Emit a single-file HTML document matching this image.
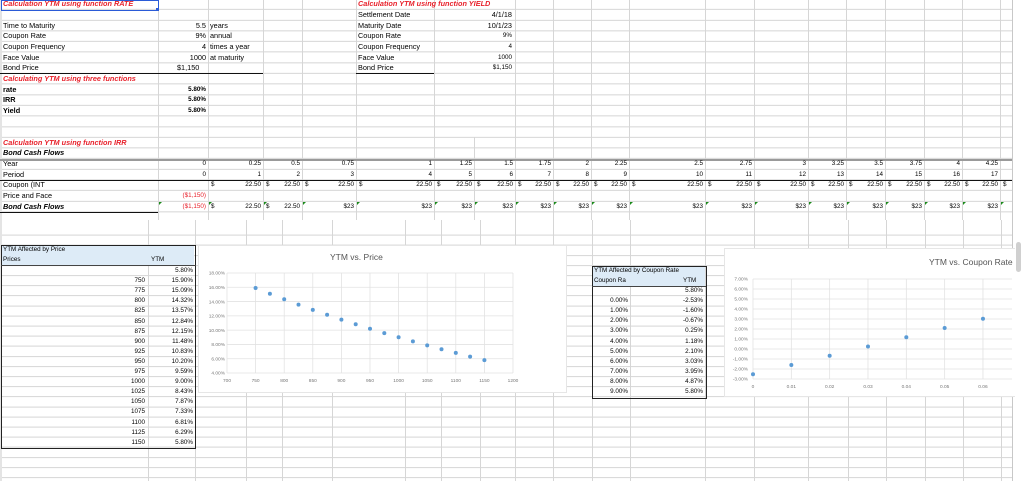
<!DOCTYPE html>
<html><head><meta charset="utf-8">
<style>
html,body{margin:0;padding:0;background:#fff;}
body{width:1024px;height:481px;position:relative;overflow:hidden;font-family:"Liberation Sans",sans-serif;font-size:7.3px;color:#000;}
.g1{position:absolute;left:0;top:0;width:1012px;height:220px;
 background-image:repeating-linear-gradient(to bottom,transparent 0,transparent 9.65px,#d6d6d6 9.65px,#d6d6d6 10.65px);background-position:0 -0.65px;}
.g2{position:absolute;left:0;top:220px;width:1012px;height:261px;
 background-image:repeating-linear-gradient(to bottom,transparent 0,transparent 9.1px,#d6d6d6 9.1px,#d6d6d6 10.1px);background-position:0 5.6px;}
.v{position:absolute;width:1px;background:#d6d6d6;}
.t{position:absolute;white-space:nowrap;line-height:10.6px;height:10.6px;}
.r{text-align:right;}
.red{color:#e8212b;font-weight:bold;font-style:italic;}
.bi{font-weight:bold;font-style:italic;}
.b{font-weight:bold;}
.h{position:absolute;height:1px;background:#111;}
.tri{position:absolute;width:0;height:0;border-top:3px solid #1a8a1a;border-right:3px solid transparent;}
</style></head><body>
<div class="g1"></div>
<div class="g2"></div>
<div class="v" style="left:158px;top:0;height:220px"></div>
<div class="v" style="left:208px;top:0;height:220px"></div>
<div class="v" style="left:263px;top:0;height:220px"></div>
<div class="v" style="left:302px;top:0;height:220px"></div>
<div class="v" style="left:356px;top:0;height:220px"></div>
<div class="v" style="left:434px;top:0;height:220px"></div>
<div class="v" style="left:474px;top:137px;height:83px"></div>
<div class="v" style="left:515px;top:0;height:220px"></div>
<div class="v" style="left:553px;top:0;height:220px"></div>
<div class="v" style="left:591px;top:0;height:220px"></div>
<div class="v" style="left:629px;top:0;height:220px"></div>
<div class="v" style="left:705px;top:0;height:220px"></div>
<div class="v" style="left:754px;top:0;height:220px"></div>
<div class="v" style="left:808px;top:0;height:220px"></div>
<div class="v" style="left:846px;top:0;height:220px"></div>
<div class="v" style="left:885px;top:0;height:220px"></div>
<div class="v" style="left:924px;top:0;height:220px"></div>
<div class="v" style="left:962px;top:0;height:220px"></div>
<div class="v" style="left:1000px;top:0;height:220px"></div>
<div class="v" style="left:148px;top:220px;height:261px"></div>
<div class="v" style="left:195px;top:220px;height:261px"></div>
<div class="v" style="left:246px;top:220px;height:261px"></div>
<div class="v" style="left:282px;top:220px;height:261px"></div>
<div class="v" style="left:332px;top:220px;height:261px"></div>
<div class="v" style="left:405px;top:220px;height:261px"></div>
<div class="v" style="left:441px;top:220px;height:261px"></div>
<div class="v" style="left:480px;top:220px;height:261px"></div>
<div class="v" style="left:515px;top:220px;height:261px"></div>
<div class="v" style="left:553px;top:220px;height:261px"></div>
<div class="v" style="left:592px;top:220px;height:261px"></div>
<div class="v" style="left:630px;top:220px;height:261px"></div>
<div class="v" style="left:705px;top:220px;height:261px"></div>
<div class="v" style="left:754px;top:220px;height:261px"></div>
<div class="v" style="left:808px;top:220px;height:261px"></div>
<div class="v" style="left:848px;top:220px;height:261px"></div>
<div class="v" style="left:886px;top:220px;height:261px"></div>
<div class="v" style="left:925px;top:220px;height:261px"></div>
<div class="v" style="left:963px;top:220px;height:261px"></div>
<div class="v" style="left:1001px;top:220px;height:261px"></div>
<div style="position:absolute;left:1012px;top:0;width:12px;height:481px;background:#fff;border-left:1px solid #c8c8c8"></div>
<div style="position:absolute;left:1016px;top:242px;width:5px;height:30px;background:#d0d0d0;border-radius:3px"></div>
<div style="position:absolute;left:0;top:0;width:2px;height:481px;background:#e4e4e4"></div>

<div style="position:absolute;left:1px;top:0;width:156px;height:9px;border:1px solid #2a5bd7"></div>
<div style="position:absolute;left:156px;top:8px;width:3px;height:3px;background:#2a5bd7"></div>

<div class="h" style="left:0;top:73px;width:263px"></div>
<div class="h" style="left:356px;top:73px;width:78px"></div>
<div style="position:absolute;left:0;top:159px;width:1012px;height:1.5px;background:#9a9a9a"></div>
<div class="h" style="left:0;top:180px;width:1012px"></div>
<div class="h" style="left:0;top:212px;width:158px"></div>

<div class="t red" style="left:3px;top:-1px">Calculation YTM using function RATE</div>
<div class="t" style="left:3px;top:20.6px">Time to Maturity</div>
<div class="t" style="left:3px;top:31.3px">Coupon Rate</div>
<div class="t" style="left:3px;top:42px">Coupon Frequency</div>
<div class="t" style="left:3px;top:52.6px">Face Value</div>
<div class="t" style="left:3px;top:63.2px">Bond Price</div>
<div class="t red" style="left:3px;top:73.9px">Calculating YTM using three functions</div>
<div class="t b" style="left:3px;top:84.5px">rate</div>
<div class="t b" style="left:3px;top:95.2px">IRR</div>
<div class="t b" style="left:3px;top:105.8px">Yield</div>
<div class="t r" style="left:158px;width:48px;top:20.6px">5.5</div>
<div class="t r" style="left:158px;width:48px;top:31.3px">9%</div>
<div class="t r" style="left:158px;width:48px;top:42px">4</div>
<div class="t r" style="left:158px;width:48px;top:52.6px">1000</div>
<div class="t" style="left:177px;top:63.2px">$1,150</div>
<div class="t" style="left:210px;top:20.6px">years</div>
<div class="t" style="left:210px;top:31.3px">annual</div>
<div class="t" style="left:210px;top:42px">times a year</div>
<div class="t" style="left:210px;top:52.6px">at maturity</div>
<div class="t r b" style="left:158px;width:48px;top:84.5px;font-size:6.3px">5.80%</div>
<div class="t r b" style="left:158px;width:48px;top:95.2px;font-size:6.3px">5.80%</div>
<div class="t r b" style="left:158px;width:48px;top:105.8px;font-size:6.3px">5.80%</div>

<div class="t red" style="left:358px;top:-1px">Calculation YTM using function YIELD</div>
<div class="t" style="left:358px;top:10px">Settlement Date</div>
<div class="t" style="left:358px;top:20.6px">Maturity Date</div>
<div class="t" style="left:358px;top:31.3px">Coupon Rate</div>
<div class="t" style="left:358px;top:42px">Coupon Frequency</div>
<div class="t" style="left:358px;top:52.6px">Face Value</div>
<div class="t" style="left:358px;top:63.2px">Bond Price</div>
<div class="t r" style="left:440px;width:72px;top:10px">4/1/18</div>
<div class="t r" style="left:440px;width:72px;top:20.6px">10/1/23</div>
<div class="t r" style="left:440px;width:72px;top:31.3px;font-size:6.3px">9%</div>
<div class="t r" style="left:440px;width:72px;top:42px;font-size:6.3px">4</div>
<div class="t r" style="left:440px;width:72px;top:52.6px;font-size:6.3px">1000</div>
<div class="t r" style="left:440px;width:72px;top:63.2px;font-size:6.3px">$1,150</div>

<div class="t red" style="left:3px;top:137.8px">Calculation YTM using function IRR</div>
<div class="t bi" style="left:3px;top:148.4px">Bond Cash Flows</div>
<div class="t" style="left:3px;top:159.1px">Year</div>
<div class="t" style="left:3px;top:169.7px">Period</div>
<div class="t" style="left:3px;top:180.4px">Coupon (INT</div>
<div class="t" style="left:3px;top:191px">Price and Face</div>
<div class="t bi" style="left:3px;top:201.7px">Bond Cash Flows</div>
<div class="t r" style="left:158px;width:48px;top:159.1px;font-size:6.3px">0</div>
<div class="t r" style="left:158px;width:48px;top:169.7px;font-size:6.3px">0</div>
<div class="t r" style="left:158px;width:48px;top:191px;font-size:6.3px;color:#e8212b">($1,150)</div>
<div class="t r" style="left:158px;width:48px;top:201.7px;font-size:6.3px;color:#e8212b">($1,150)</div>
<div class="tri" style="left:159px;top:202px"></div>

<div id="cols"></div>
<script>
(function(){
var L=[208,263,302,356,434,474,515,553,591,629,705,754,808,846,885,924,962];
var R=[263,302,356,434,474,515,553,591,629,705,754,808,846,885,924,962,1000];
var yr=["0.25","0.5","0.75","1","1.25","1.5","1.75","2","2.25","2.5","2.75","3","3.25","3.5","3.75","4","4.25"];
var h="";
function cell(l,w,top,txt){return '<div class="t r" style="left:'+l+'px;width:'+w+'px;top:'+top+'px;font-size:6.3px">'+txt+'</div>';}
for(var i=0;i<17;i++){
 var l=L[i],w=R[i]-L[i]-2;
 h+=cell(l,w,159.1,yr[i]);
 h+=cell(l,w,169.7,String(i+1));
 h+='<div class="t" style="left:'+(l+3)+'px;top:180.4px;font-size:6.3px">$</div>';
 h+=cell(l,w,180.4,"22.50");
 if(i<2){h+='<div class="t" style="left:'+(l+3)+'px;top:201.7px;font-size:6.3px">$</div>';h+=cell(l,w,201.7,"22.50");}
 else h+=cell(l,w,201.7,"$23");
 h+='<div class="tri" style="left:'+(l+1)+'px;top:202px"></div>';
}
h+='<div class="t" style="left:1003px;top:180.4px;font-size:6.3px">$</div>';
h+='<div class="tri" style="left:1001px;top:202px"></div>';
document.getElementById("cols").innerHTML=h;
})();
</script>

<div style="position:absolute;left:1px;top:245px;width:193px;height:20px;background:#ddebf7"></div>
<div style="position:absolute;left:1px;top:245px;width:193px;height:202px;border:1px solid #222"></div>
<div class="h" style="left:1px;top:265px;width:195px;background:#444"></div>
<div class="t" style="left:3px;top:245px;font-size:6.3px;line-height:10px">YTM Affected by Price</div>
<div class="t" style="left:3px;top:255px;font-size:6.3px;line-height:10px">Prices</div>
<div class="t" style="left:151px;top:255px;font-size:6.3px;line-height:10px">YTM</div>
<div id="pt"></div>
<div style="position:absolute;left:592px;top:266px;width:113px;height:20px;background:#ddebf7"></div>
<div style="position:absolute;left:592px;top:266px;width:113px;height:131px;border:1px solid #222"></div>
<div class="h" style="left:592px;top:286px;width:114px;background:#444"></div>
<div class="t" style="left:594px;top:266px;font-size:6.3px;line-height:10px">YTM Affected by Coupon Rate</div>
<div class="t" style="left:594px;top:276px;font-size:6.3px;line-height:10px">Coupon Ra</div>
<div class="t" style="left:683px;top:276px;font-size:6.3px;line-height:10px">YTM</div>
<div id="ct"></div>

<div style="position:absolute;left:198px;top:245px;width:367px;height:146px;background:#fff;border:1px solid #e6e6e6"></div>
<div class="t" style="left:330px;top:252px;font-size:8.5px;color:#555">YTM vs. Price</div>
<svg style="position:absolute;left:0;top:0" width="1024" height="481" id="sv"></svg>

<div style="position:absolute;left:724px;top:248px;width:290px;height:147px;background:#fff;border:1px solid #e6e6e6;border-right:none"></div>
<div class="t" style="left:929px;top:257px;font-size:8.5px;color:#555">YTM vs. Coupon Rate</div>
<svg style="position:absolute;left:0;top:0" width="1024" height="481" id="sv2"></svg>

<script>
(function(){
var P=[750,775,800,825,850,875,900,925,950,975,1000,1025,1050,1075,1100,1125,1150];
var Y=[15.90,15.09,14.32,13.57,12.84,12.15,11.48,10.83,10.20,9.59,9.00,8.43,7.87,7.33,6.81,6.29,5.80];
var h='<div class="t r" style="left:148px;width:45px;top:266px;font-size:6.3px;line-height:10px">5.80%</div>';
for(var i=0;i<17;i++){var t=276.1+10.1*i;
 h+='<div class="t r" style="left:100px;width:45px;top:'+t+'px;font-size:6.3px;line-height:10px">'+P[i]+'</div>';
 h+='<div class="t r" style="left:148px;width:45px;top:'+t+'px;font-size:6.3px;line-height:10px">'+Y[i].toFixed(2)+'%</div>';}
document.getElementById("pt").innerHTML=h;
var CR=[0,1,2,3,4,5,6,7,8,9],CY=["-2.53","-1.60","-0.67","0.25","1.18","2.10","3.03","3.95","4.87","5.80"];
h='<div class="t r" style="left:630px;width:73px;top:286px;font-size:6.3px;line-height:10px">5.80%</div>';
for(i=0;i<10;i++){var t2=296.1+10.1*i;
 h+='<div class="t r" style="left:592px;width:36px;top:'+t2+'px;font-size:6.3px;line-height:10px">'+CR[i].toFixed(2)+'%</div>';
 h+='<div class="t r" style="left:630px;width:73px;top:'+t2+'px;font-size:6.3px;line-height:10px">'+CY[i]+'%</div>';}
document.getElementById("ct").innerHTML=h;
var s='';
for(i=0;i<=7;i++){var y=273+i*100/7;s+='<line x1="227" x2="513" y1="'+y+'" y2="'+y+'" stroke="#e2e2e2" stroke-width="0.8"/>';
 s+='<text x="225" y="'+(y+1.7)+'" font-size="4.8" fill="#777" text-anchor="end" font-family="Liberation Sans">'+(18-2*i).toFixed(2)+'%</text>';}
for(i=0;i<=10;i++){var x=227+i*28.6;s+='<line x1="'+x+'" x2="'+x+'" y1="273" y2="373" stroke="#e2e2e2" stroke-width="0.8"/>';
 s+='<text x="'+x+'" y="382" font-size="4.8" fill="#777" text-anchor="middle" font-family="Liberation Sans">'+(700+50*i)+'</text>';}
for(i=0;i<17;i++){s+='<circle cx="'+(227+(P[i]-700)*0.572)+'" cy="'+(373-(Y[i]-4)*7.143)+'" r="2" fill="#5b9bd5"/>';}
document.getElementById("sv").innerHTML=s;
s='';
for(i=0;i<=10;i++){var y2=279+i*10;s+='<line x1="753" x2="1012" y1="'+y2+'" y2="'+y2+'" stroke="#e2e2e2" stroke-width="0.8"/>';
 s+='<text x="748" y="'+(y2+1.7)+'" font-size="4.8" fill="#777" text-anchor="end" font-family="Liberation Sans">'+(7-i).toFixed(2)+'%</text>';}
for(i=0;i<=6;i++){var x2=753+i*38.33;s+='<line x1="'+x2+'" x2="'+x2+'" y1="279" y2="379" stroke="#e2e2e2" stroke-width="0.8"/>';
 s+='<text x="'+x2+'" y="388" font-size="4.8" fill="#777" text-anchor="middle" font-family="Liberation Sans">'+(i==0?'0':(i/100).toFixed(2))+'</text>';}
for(i=0;i<7;i++){s+='<circle cx="'+(753+i*38.33)+'" cy="'+(279+(7-parseFloat(CY[i]))*10)+'" r="2" fill="#5b9bd5"/>';}
document.getElementById("sv2").innerHTML=s;
})();
</script>
</body></html>
